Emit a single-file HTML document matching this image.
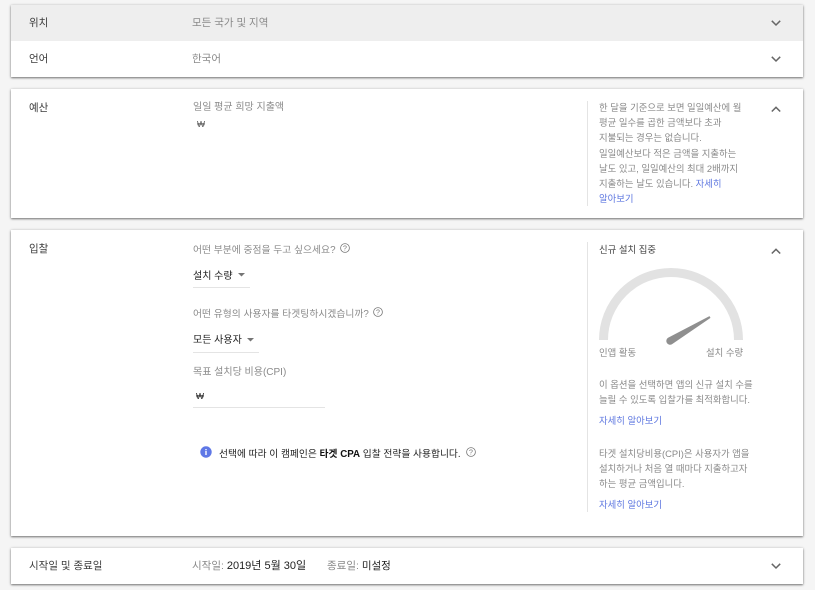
<!DOCTYPE html>
<html lang="ko">
<head>
<meta charset="utf-8">
<style>
html,body{margin:0;padding:0;width:815px;height:590px;overflow:hidden;background:#f5f5f5}
body{font-family:"Liberation Sans","Noto Sans CJK KR",sans-serif;font-size:10px;color:#757575;position:relative}
.c{position:absolute;left:11px;width:792px;background:#fff;box-shadow:0 1px 2px rgba(0,0,0,.5),0 0 3px rgba(0,0,0,.12)}
.t{position:absolute;white-space:nowrap;line-height:14px;font-size:10px;filter:blur(.25px)}
.b{font-size:10.5px}
.p{font-size:9.4px}
.k{color:#3c3c3c}
.g{color:#8a8a8a}
.d{color:#212121}
.a{color:#5f78e0}
.r{position:absolute;background:#e4e4e4}
svg{position:absolute;overflow:visible}
</style>
</head>
<body>
<div class="c" style="top:5px;height:72px"></div>
<div style="position:absolute;left:11px;top:5px;width:792px;height:36px;background:#eee"></div>
<div class="c" style="top:89px;height:129px"></div>
<div class="c" style="top:230px;height:306px"></div>
<div class="c" style="top:548px;height:36px"></div>

<div class="t k b" style="left:29px;top:16px">위치</div>
<div class="t g b" style="left:192px;top:16px">모든 국가 및 지역</div>
<div class="t k b" style="left:29px;top:52px">언어</div>
<div class="t g b" style="left:192px;top:52px">한국어</div>

<div class="t k b" style="left:29px;top:101px">예산</div>
<div class="t g" style="left:193px;top:101px">일일 평균 희망 지출액</div>
<div class="t" style="left:197px;top:117px;color:#555;font-size:8.500px">₩</div>

<div class="r" style="left:587px;top:101px;width:1px;height:105px"></div>
<div class="t g p" style="left:599px;top:100px;line-height:15.200px">한 달을 기준으로 보면 일일예산에 월<br>평균 일수를 곱한 금액보다 초과<br>지불되는 경우는 없습니다.<br>일일예산보다 적은 금액을 지출하는<br>날도 있고, 일일예산의 최대 2배까지<br>지출하는 날도 있습니다. <span class="a">자세히<br>알아보기</span></div>

<div class="t k b" style="left:29px;top:242px">입찰</div>
<div class="t g" style="left:193px;top:244px;font-size:9.800px">어떤 부분에 중점을 두고 싶으세요?</div>
<svg style="left:340px;top:243px" width="10" height="10" viewBox="0 0 10 10"><circle cx="5" cy="5" r="4.400" fill="none" stroke="#757575" stroke-width=".8"/><text x="5" y="7.600" text-anchor="middle" font-size="7" fill="#757575" font-family="Liberation Sans">?</text></svg>
<div class="t d" style="left:193px;top:270px">설치 수량</div>
<svg style="left:238px;top:273px" width="7" height="4"><path d="M0 0H7L3.500 3.500Z" fill="#757575"/></svg>
<div class="r" style="left:193px;top:287px;width:57px;height:1px"></div>

<div class="t g" style="left:193px;top:308px;font-size:9.800px">어떤 유형의 사용자를 타겟팅하시겠습니까?</div>
<svg style="left:373px;top:307px" width="10" height="10" viewBox="0 0 10 10"><circle cx="5" cy="5" r="4.400" fill="none" stroke="#757575" stroke-width=".8"/><text x="5" y="7.600" text-anchor="middle" font-size="7" fill="#757575" font-family="Liberation Sans">?</text></svg>
<div class="t d" style="left:193px;top:334px">모든 사용자</div>
<svg style="left:247px;top:338px" width="7" height="4"><path d="M0 0H7L3.500 3.500Z" fill="#757575"/></svg>
<div class="r" style="left:193px;top:352px;width:66px;height:1px"></div>

<div class="t g" style="left:193px;top:366px">목표 설치당 비용(CPI)</div>
<div class="t d" style="left:196px;top:389px;font-size:8.500px">₩</div>
<div class="r" style="left:193px;top:407px;width:132px;height:1px"></div>

<svg style="left:200px;top:446px" width="12" height="12" viewBox="0 0 12 12"><circle cx="6" cy="6" r="5.700" fill="#5f78e6"/><rect x="5.300" y="5" width="1.400" height="4" fill="#fff"/><rect x="5.300" y="3" width="1.400" height="1.300" fill="#fff"/></svg>
<div class="t d" style="left:219px;top:448px;font-size:9.750px">선택에 따라 이 캠페인은 <b style="color:#111">타겟 CPA</b> 입찰 전략을 사용합니다.</div>
<svg style="left:466px;top:447px" width="10" height="10" viewBox="0 0 10 10"><circle cx="5" cy="5" r="4.400" fill="none" stroke="#757575" stroke-width=".8"/><text x="5" y="7.600" text-anchor="middle" font-size="7" fill="#757575" font-family="Liberation Sans">?</text></svg>

<div class="r" style="left:587px;top:242px;width:1px;height:270px"></div>
<div class="t p" style="left:599px;top:243px;color:#444">신규 설치 집중</div>
<svg style="left:599px;top:269px" width="144" height="72" viewBox="0 0 144 72">
  <path d="M4.500 71A67.500 67.500 0 0 1 139.500 71" fill="none" stroke="#e2e2e2" stroke-width="9"/>
  <path d="M69.050 68.740L110.500 47.100L111.500 48.900L72.950 75.260A3.800 3.800 0 0 1 69.050 68.740Z" fill="#8f8f8f"/>
</svg>
<div class="t g p" style="left:599px;top:346px">인앱 활동</div>
<div class="t g p" style="left:706px;top:346px">설치 수량</div>

<div class="t g p" style="left:599px;top:377px;line-height:15px">이 옵션을 선택하면 앱의 신규 설치 수를<br>늘릴 수 있도록 입찰가를 최적화합니다.</div>
<div class="t a p" style="left:599px;top:414px">자세히 알아보기</div>
<div class="t g p" style="left:599px;top:446px;line-height:15px">타겟 설치당비용(CPI)은 사용자가 앱을<br>설치하거나 처음 열 때마다 지출하고자<br>하는 평균 금액입니다.</div>
<div class="t a p" style="left:599px;top:498px">자세히 알아보기</div>

<div class="t k b" style="left:29px;top:559px">시작일 및 종료일</div>
<div class="t g b" style="left:192px;top:559px">시작일: <span class="d" style="font-size:11px">2019년 5월 30일</span></div>
<div class="t g b" style="left:327px;top:559px">종료일: <span class="d">미설정</span></div>

<svg style="left:771px;top:20px" width="10" height="7"><path d="M.8 .8L5 5L9.200 .8" fill="none" stroke="#666" stroke-width="1.500"/></svg>
<svg style="left:771px;top:56px" width="10" height="7"><path d="M.8 .8L5 5L9.200 .8" fill="none" stroke="#666" stroke-width="1.500"/></svg>
<svg style="left:771px;top:106px" width="10" height="7"><path d="M.8 5.500L5 1.300L9.200 5.500" fill="none" stroke="#666" stroke-width="1.500"/></svg>
<svg style="left:771px;top:248px" width="10" height="7"><path d="M.8 5.500L5 1.300L9.200 5.500" fill="none" stroke="#666" stroke-width="1.500"/></svg>
<svg style="left:771px;top:563px" width="10" height="7"><path d="M.8 .8L5 5L9.200 .8" fill="none" stroke="#666" stroke-width="1.500"/></svg>
</body>
</html>
